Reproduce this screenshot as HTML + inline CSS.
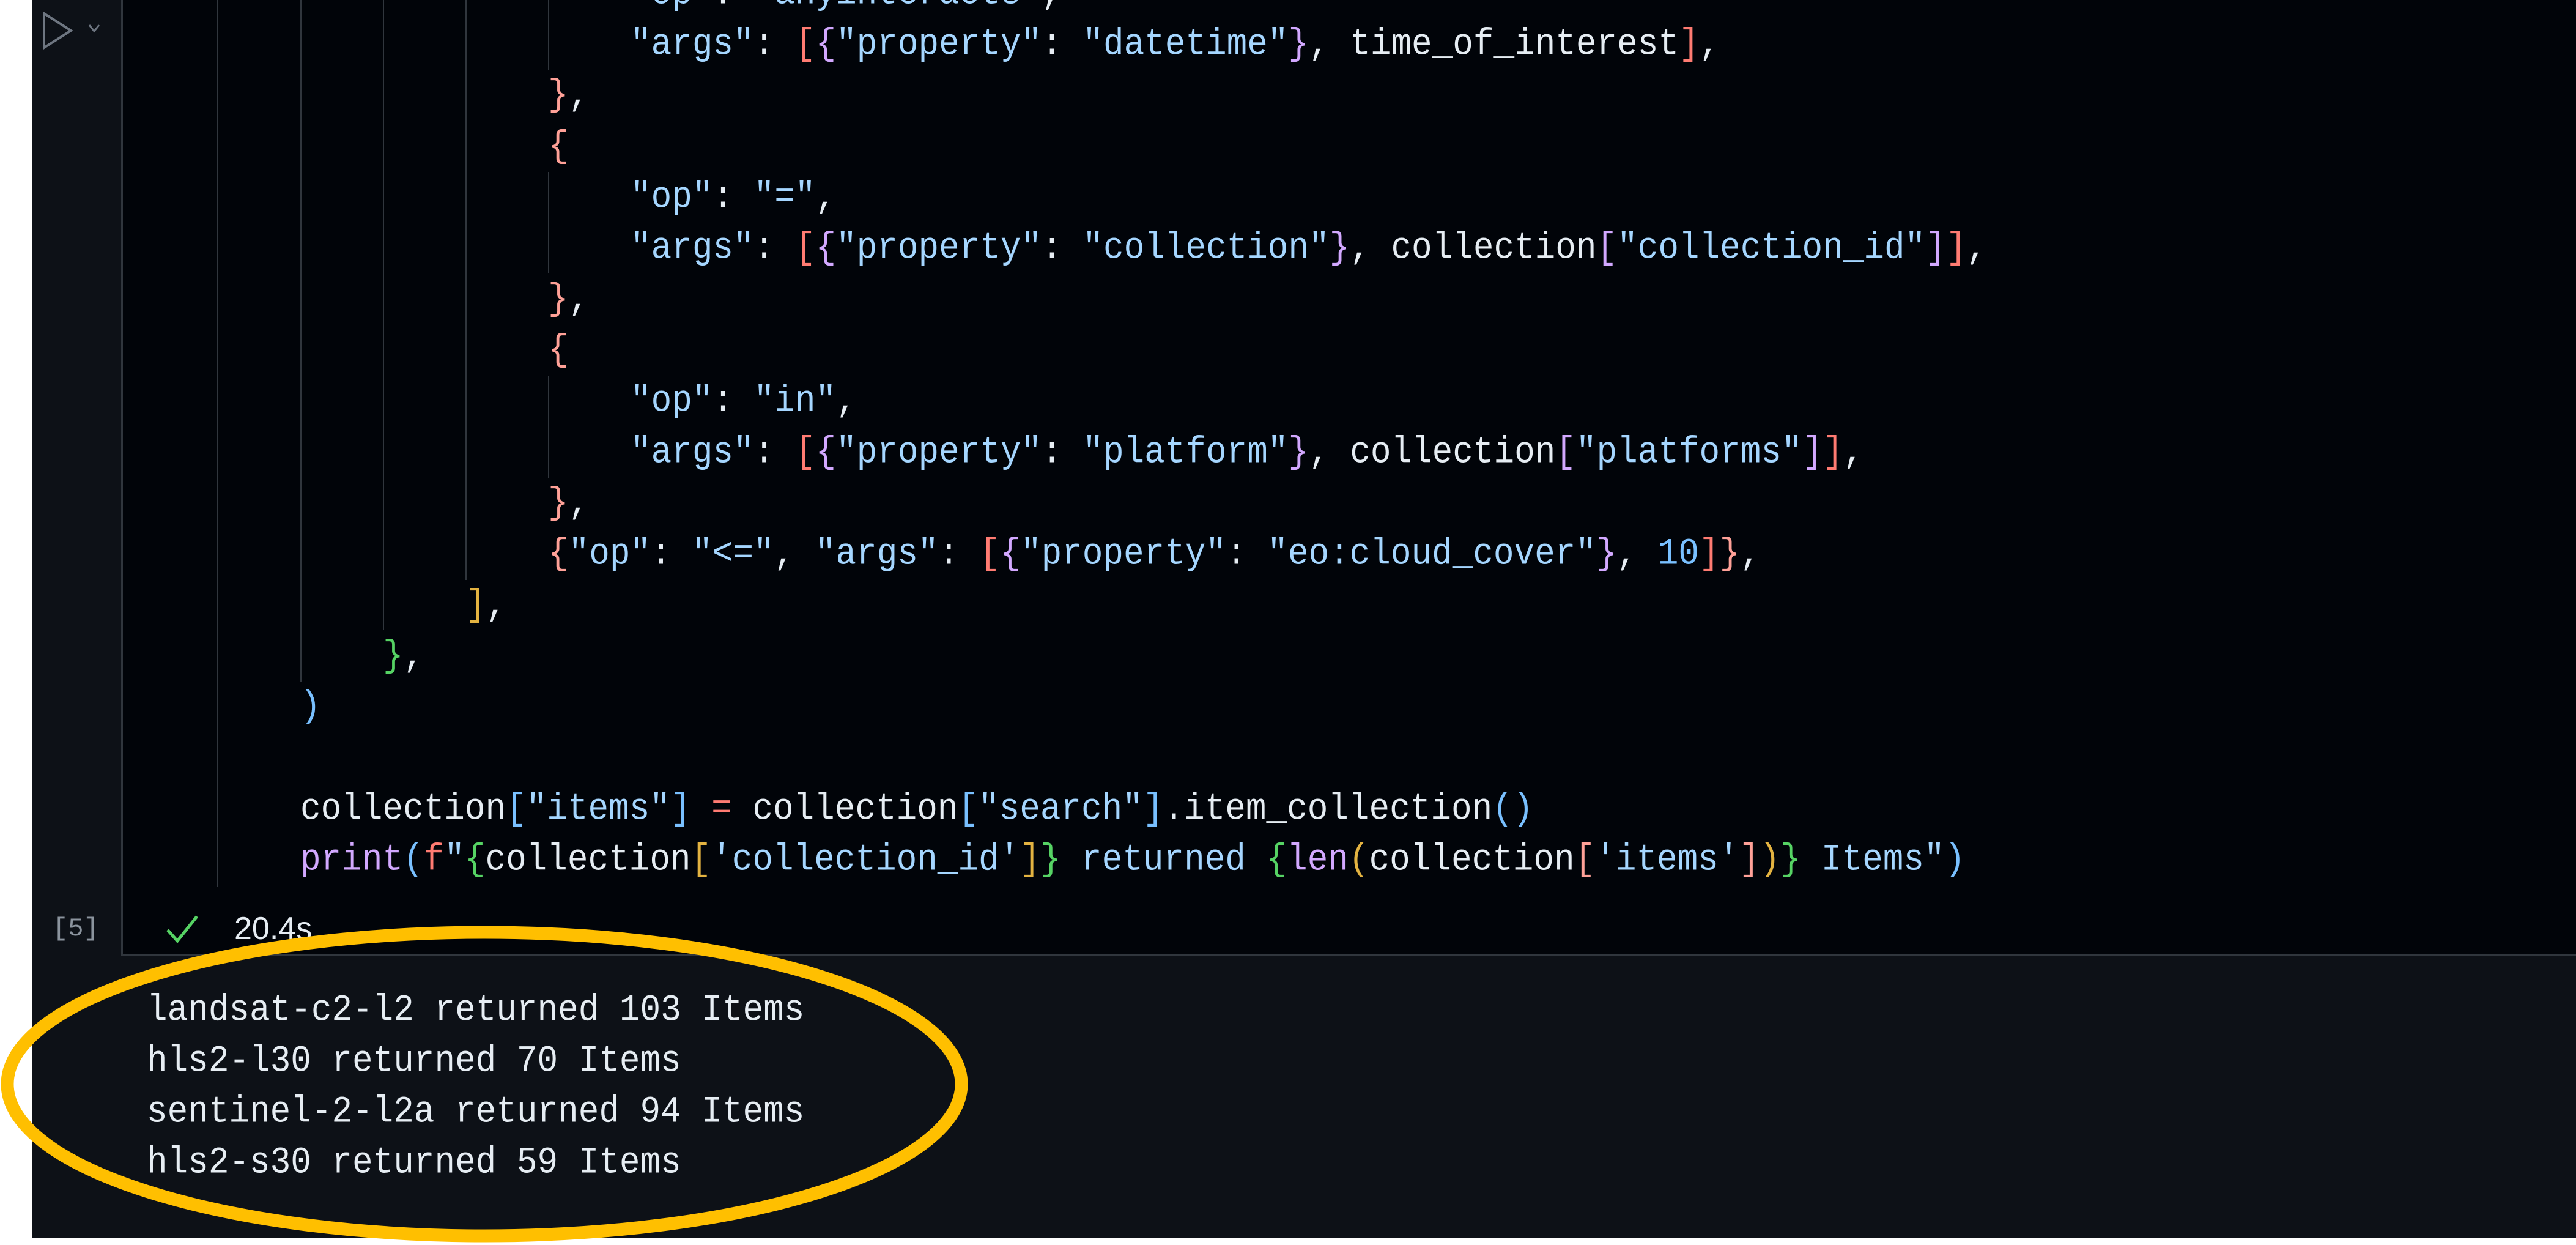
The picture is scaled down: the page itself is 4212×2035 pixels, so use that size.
<!DOCTYPE html>
<html><head><meta charset="utf-8"><style>
html,body{margin:0;padding:0;}
body{width:4212px;height:2035px;background:#fff;position:relative;overflow:hidden;font-family:"Liberation Mono",monospace;}
.bg{position:absolute;left:53px;top:0;width:4159px;height:2023px;background:#0d1117;}
.cell{position:absolute;left:198px;top:0;width:4014px;height:1563px;background:#010409;border-left:3px solid #30363d;border-bottom:3px solid #30363d;box-sizing:border-box;}
.ln{position:absolute;font-size:56px;line-height:83px;height:83px;white-space:pre;color:#e6edf3;transform:scaleY(1.1);transform-origin:0 50%;}
.g{position:absolute;width:2px;background:#30363d;}
.s{color:#a5d6ff}.b1{color:#79c0ff}.b2{color:#56d364}.b3{color:#e3b341}.b4{color:#ffa198}.b5{color:#ff7b72}.b6{color:#d2a8ff}
.p{color:#d2a8ff}.r{color:#ff7b72}.n{color:#79c0ff}
.out{position:absolute;left:240px;font-size:56px;line-height:83px;white-space:pre;color:#e6edf3;transform:scaleY(1.1);transform-origin:0 50%;}
</style></head><body>
<div class="bg"></div>
<div class="cell"></div>
<div class="g" style="left:355px;top:0;height:1450px"></div>
<div class="g" style="left:491px;top:0;height:1115px"></div>
<div class="g" style="left:626px;top:0;height:1030px"></div>
<div class="g" style="left:761px;top:0;height:948px"></div>
<div class="g" style="left:896px;top:0;height:114px"></div>
<div class="g" style="left:896px;top:281px;height:166px"></div>
<div class="g" style="left:896px;top:614px;height:167px"></div>
<svg style="position:absolute;left:60px;top:10px" width="140" height="90"><path d="M12 12 L12 68 L56 40 Z" fill="none" stroke="#6e7681" stroke-width="4"/><path d="M86 31 L94 41 L102 31" fill="none" stroke="#6e7681" stroke-width="3"/></svg>
<div class="ln" style="left:1031px;top:-52px"><span class="s">"op"</span>: <span class="s">"anyinteracts"</span>,</div>
<div class="ln" style="left:1031px;top:31px"><span class="s">"args"</span>: <span class="b5">[</span><span class="b6">{</span><span class="s">"property"</span>: <span class="s">"datetime"</span><span class="b6">}</span>, time_of_interest<span class="b5">]</span>,</div>
<div class="ln" style="left:896px;top:114px"><span class="b4">}</span>,</div>
<div class="ln" style="left:896px;top:198px"><span class="b4">{</span></div>
<div class="ln" style="left:1031px;top:281px"><span class="s">"op"</span>: <span class="s">"="</span>,</div>
<div class="ln" style="left:1031px;top:364px"><span class="s">"args"</span>: <span class="b5">[</span><span class="b6">{</span><span class="s">"property"</span>: <span class="s">"collection"</span><span class="b6">}</span>, collection<span class="b6">[</span><span class="s">"collection_id"</span><span class="b6">]</span><span class="b5">]</span>,</div>
<div class="ln" style="left:896px;top:448px"><span class="b4">}</span>,</div>
<div class="ln" style="left:896px;top:531px"><span class="b4">{</span></div>
<div class="ln" style="left:1031px;top:614px"><span class="s">"op"</span>: <span class="s">"in"</span>,</div>
<div class="ln" style="left:1031px;top:698px"><span class="s">"args"</span>: <span class="b5">[</span><span class="b6">{</span><span class="s">"property"</span>: <span class="s">"platform"</span><span class="b6">}</span>, collection<span class="b6">[</span><span class="s">"platforms"</span><span class="b6">]</span><span class="b5">]</span>,</div>
<div class="ln" style="left:896px;top:781px"><span class="b4">}</span>,</div>
<div class="ln" style="left:896px;top:864px"><span class="b4">{</span><span class="s">"op"</span>: <span class="s">"&lt;="</span>, <span class="s">"args"</span>: <span class="b5">[</span><span class="b6">{</span><span class="s">"property"</span>: <span class="s">"eo:cloud_cover"</span><span class="b6">}</span>, <span class="n">10</span><span class="b5">]</span><span class="b4">}</span>,</div>
<div class="ln" style="left:761px;top:948px"><span class="b3">]</span>,</div>
<div class="ln" style="left:626px;top:1031px"><span class="b2">}</span>,</div>
<div class="ln" style="left:491px;top:1114px"><span class="b1">)</span></div>
<div class="ln" style="left:491px;top:1281px">collection<span class="b1">[</span><span class="s">"items"</span><span class="b1">]</span> <span class="r">=</span> collection<span class="b1">[</span><span class="s">"search"</span><span class="b1">]</span>.item_collection<span class="b1">()</span></div>
<div class="ln" style="left:491px;top:1364px"><span class="p">print</span><span class="b1">(</span><span class="r">f</span><span class="s">"</span><span class="b2">{</span>collection<span class="b3">[</span><span class="s">'collection_id'</span><span class="b3">]</span><span class="b2">}</span><span class="s"> returned </span><span class="b2">{</span><span class="p">len</span><span class="b3">(</span>collection<span class="b4">[</span><span class="s">'items'</span><span class="b4">]</span><span class="b3">)</span><span class="b2">}</span><span class="s"> Items"</span><span class="b1">)</span></div>
<div style="position:absolute;left:86px;top:1494px;font-size:42px;color:#8b949e;font-family:'Liberation Mono',monospace">[5]</div>
<svg style="position:absolute;left:270px;top:1492px" width="60" height="55"><path d="M4 28 L20 46 L52 6" fill="none" stroke="#56d364" stroke-width="5"/></svg>
<div style="position:absolute;left:383px;top:1488px;font-size:52px;color:#e6edf3;font-family:'Liberation Sans',sans-serif">20.4s</div>
<div class="out" style="top:1610px">landsat-c2-l2 returned 103 Items</div>
<div class="out" style="top:1693px">hls2-l30 returned 70 Items</div>
<div class="out" style="top:1776px">sentinel-2-l2a returned 94 Items</div>
<div class="out" style="top:1859px">hls2-s30 returned 59 Items</div>
<svg style="position:absolute;left:0;top:0" width="4212" height="2035"><ellipse cx="792" cy="1772" rx="780" ry="248" fill="none" stroke="#ffbf00" stroke-width="21"/></svg>
</body></html>
